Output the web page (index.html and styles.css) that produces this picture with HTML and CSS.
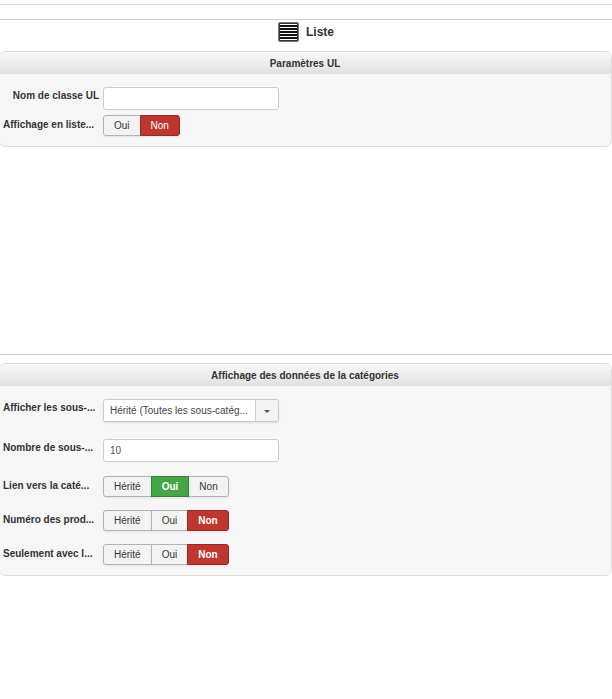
FILE: index.html
```html
<!DOCTYPE html>
<html lang="fr">

<head>
    <meta charset="UTF-8">
    <meta name="viewport" content="width=device-width, initial-scale=1.0">
    <title>Liste</title>
    <link rel="stylesheet" href="styles.css">
</head>

<body>
    <div class="top-bar"></div>

    <section class="block block-list">
        <h2 class="block-title">
            <svg class="list-icon" viewBox="0 0 21 20" width="21" height="20" aria-hidden="true">
                <rect x="0" y="0" width="21" height="20" rx="2" fill="#777" />
                <rect x="1" y="1" width="19" height="18" rx="1" fill="#333" />
                <rect x="2" y="2" width="17" height="16" fill="#fff" />
                <path d="M2 4h17M2 7h17M2 10h17M2 13h17M2 16h17" stroke="#111" stroke-width="2" />
            </svg>
            Liste
        </h2>

        <div class="panel">
            <h3 class="panel-title">Paramètres UL</h3>
            <div class="panel-body compact">
                <div class="row">
                    <label class="name" for="ul-class">Nom de classe UL</label>
                    <input class="text" type="text" id="ul-class">
                </div>
                <div class="row" role="radiogroup" aria-labelledby="n-list">
                    <span class="name cut" id="n-list">Affichage en liste...</span>
                    <div class="toggle light">
                        <input type="radio" name="list" id="list-1"><label for="list-1">Oui</label>
                        <input type="radio" name="list" id="list-0" class="no" checked><label for="list-0">Non</label>
                    </div>
                </div>
            </div>
        </div>
    </section>

    <section class="block">
        <div class="panel">
            <h3 class="panel-title">Affichage des données de la catégories</h3>
            <div class="panel-body">
                <div class="row row-select">
                    <label class="name cut" for="sub">Afficher les sous-...</label>
                    <div class="select">
                        <select id="sub">
                            <option>Hérité (Toutes les sous-catég...</option>
                        </select>
                    </div>
                </div>
                <div class="row row-text">
                    <label class="name cut" for="sub-count">Nombre de sous-...</label>
                    <input class="text" type="text" id="sub-count" value="10">
                </div>
                <div class="row" role="radiogroup" aria-labelledby="n-link">
                    <span class="name cut" id="n-link">Lien vers la caté...</span>
                    <div class="toggle">
                        <input type="radio" name="link" id="link-h"><label for="link-h">Hérité</label>
                        <input type="radio" name="link" id="link-1" class="yes" checked><label for="link-1">Oui</label>
                        <input type="radio" name="link" id="link-0" class="no"><label for="link-0">Non</label>
                    </div>
                </div>
                <div class="row" role="radiogroup" aria-labelledby="n-number">
                    <span class="name cut" id="n-number">Numéro des prod...</span>
                    <div class="toggle">
                        <input type="radio" name="number" id="number-h"><label for="number-h">Hérité</label>
                        <input type="radio" name="number" id="number-1" class="yes"><label for="number-1">Oui</label>
                        <input type="radio" name="number" id="number-0" class="no" checked><label for="number-0">Non</label>
                    </div>
                </div>
                <div class="row" role="radiogroup" aria-labelledby="n-only">
                    <span class="name cut" id="n-only">Seulement avec l...</span>
                    <div class="toggle">
                        <input type="radio" name="only" id="only-h"><label for="only-h">Hérité</label>
                        <input type="radio" name="only" id="only-1" class="yes"><label for="only-1">Oui</label>
                        <input type="radio" name="only" id="only-0" class="no" checked><label for="only-0">Non</label>
                    </div>
                </div>
            </div>
        </div>
    </section>
</body>

</html>
```
FILE: styles.css
```css
* {
    box-sizing: border-box;
}

body {
    margin: 0;
    background: #fff;
    color: #333;
    font-family: "Liberation Sans", Arial, sans-serif;
    font-size: 10px;
}

.top-bar {
    height: 5px;
    margin-bottom: 14px;
    border-bottom: 1px solid #ddd;
}

.block {
    border-top: 1px solid #ccc;
    padding-top: 8px;
}

.block-list {
    min-height: 335px;
    padding-top: 2px;
}

.block-title {
    display: flex;
    align-items: center;
    justify-content: center;
    gap: 7px;
    height: 20px;
    margin: 0 0 9px;
    font-size: 12px;
}

.panel {
    margin-left: -2px;
    border: 1px solid #ddd;
    border-radius: 7px;
    background: #f6f6f6;
    overflow: hidden;
}

.panel-title {
    margin: 0;
    padding-top: 2px;
    background: linear-gradient(#f9f9f9, #e0e0e0);
    font-size: 10px;
    line-height: 20px;
    text-align: center;
}

.panel-body {
    display: grid;
    gap: 12px;
    padding: 13px 0 9px 4px;
}

.panel-body.compact {
    gap: 5px;
}

.row {
    display: grid;
    grid-template-columns: 96px 176px;
    gap: 4px;
    align-items: start;
    min-height: 22px;
}

.row-select {
    min-height: 28px;
}

.row-text {
    min-height: 25px;
}

.name {
    font-weight: bold;
    line-height: 18px;
    text-align: right;
    white-space: nowrap;
}

.name.cut {
    text-align: left;
}

span.name {
    line-height: 20px;
}

.text,
.select {
    width: 100%;
    height: 23px;
    border: 1px solid #ccc;
    border-radius: 3px;
    background: #fff;
}

.text {
    padding: 0 6px;
    color: #555;
    font: inherit;
}

.select {
    position: relative;
    box-shadow: 0 1px 2px rgba(0, 0, 0, 0.1);
}

.select select {
    width: 100%;
    height: 21px;
    padding: 0 24px 0 6px;
    border: 0;
    border-radius: 2px;
    appearance: none;
    background: linear-gradient(#f3f3f3, #f3f3f3) right / 23px 100% no-repeat #fff;
    color: #444;
    font: inherit;
}

.select::before {
    content: "";
    position: absolute;
    top: 0;
    right: 22px;
    height: 100%;
    border-left: 1px solid #ccc;
}

.select::after {
    content: "";
    position: absolute;
    top: 10px;
    right: 8px;
    border: 3px solid transparent;
    border-top-color: #555;
    border-bottom: 0;
    pointer-events: none;
}

.toggle {
    display: flex;
}

.toggle input {
    position: absolute;
    opacity: 0;
    margin: 0;
}

.toggle label {
    margin-right: -1px;
    padding: 0 10px;
    border: 1px solid #b3b3b3;
    background: #f3f3f3;
    box-shadow: 0 1px 2px rgba(0, 0, 0, 0.08);
    line-height: 19px;
    white-space: nowrap;
}

.toggle label:first-of-type {
    border-radius: 3px 0 0 3px;
}

.toggle label:last-of-type {
    border-radius: 0 3px 3px 0;
}

.toggle input:checked + label {
    position: relative;
    color: #fff;
    font-weight: bold;
}

.toggle.light input:checked + label {
    font-weight: normal;
}

.toggle .yes:checked + label {
    border-color: #378137;
    background: #46a546;
}

.toggle .no:checked + label {
    border-color: #942a25;
    background: #bd362f;
}
```
